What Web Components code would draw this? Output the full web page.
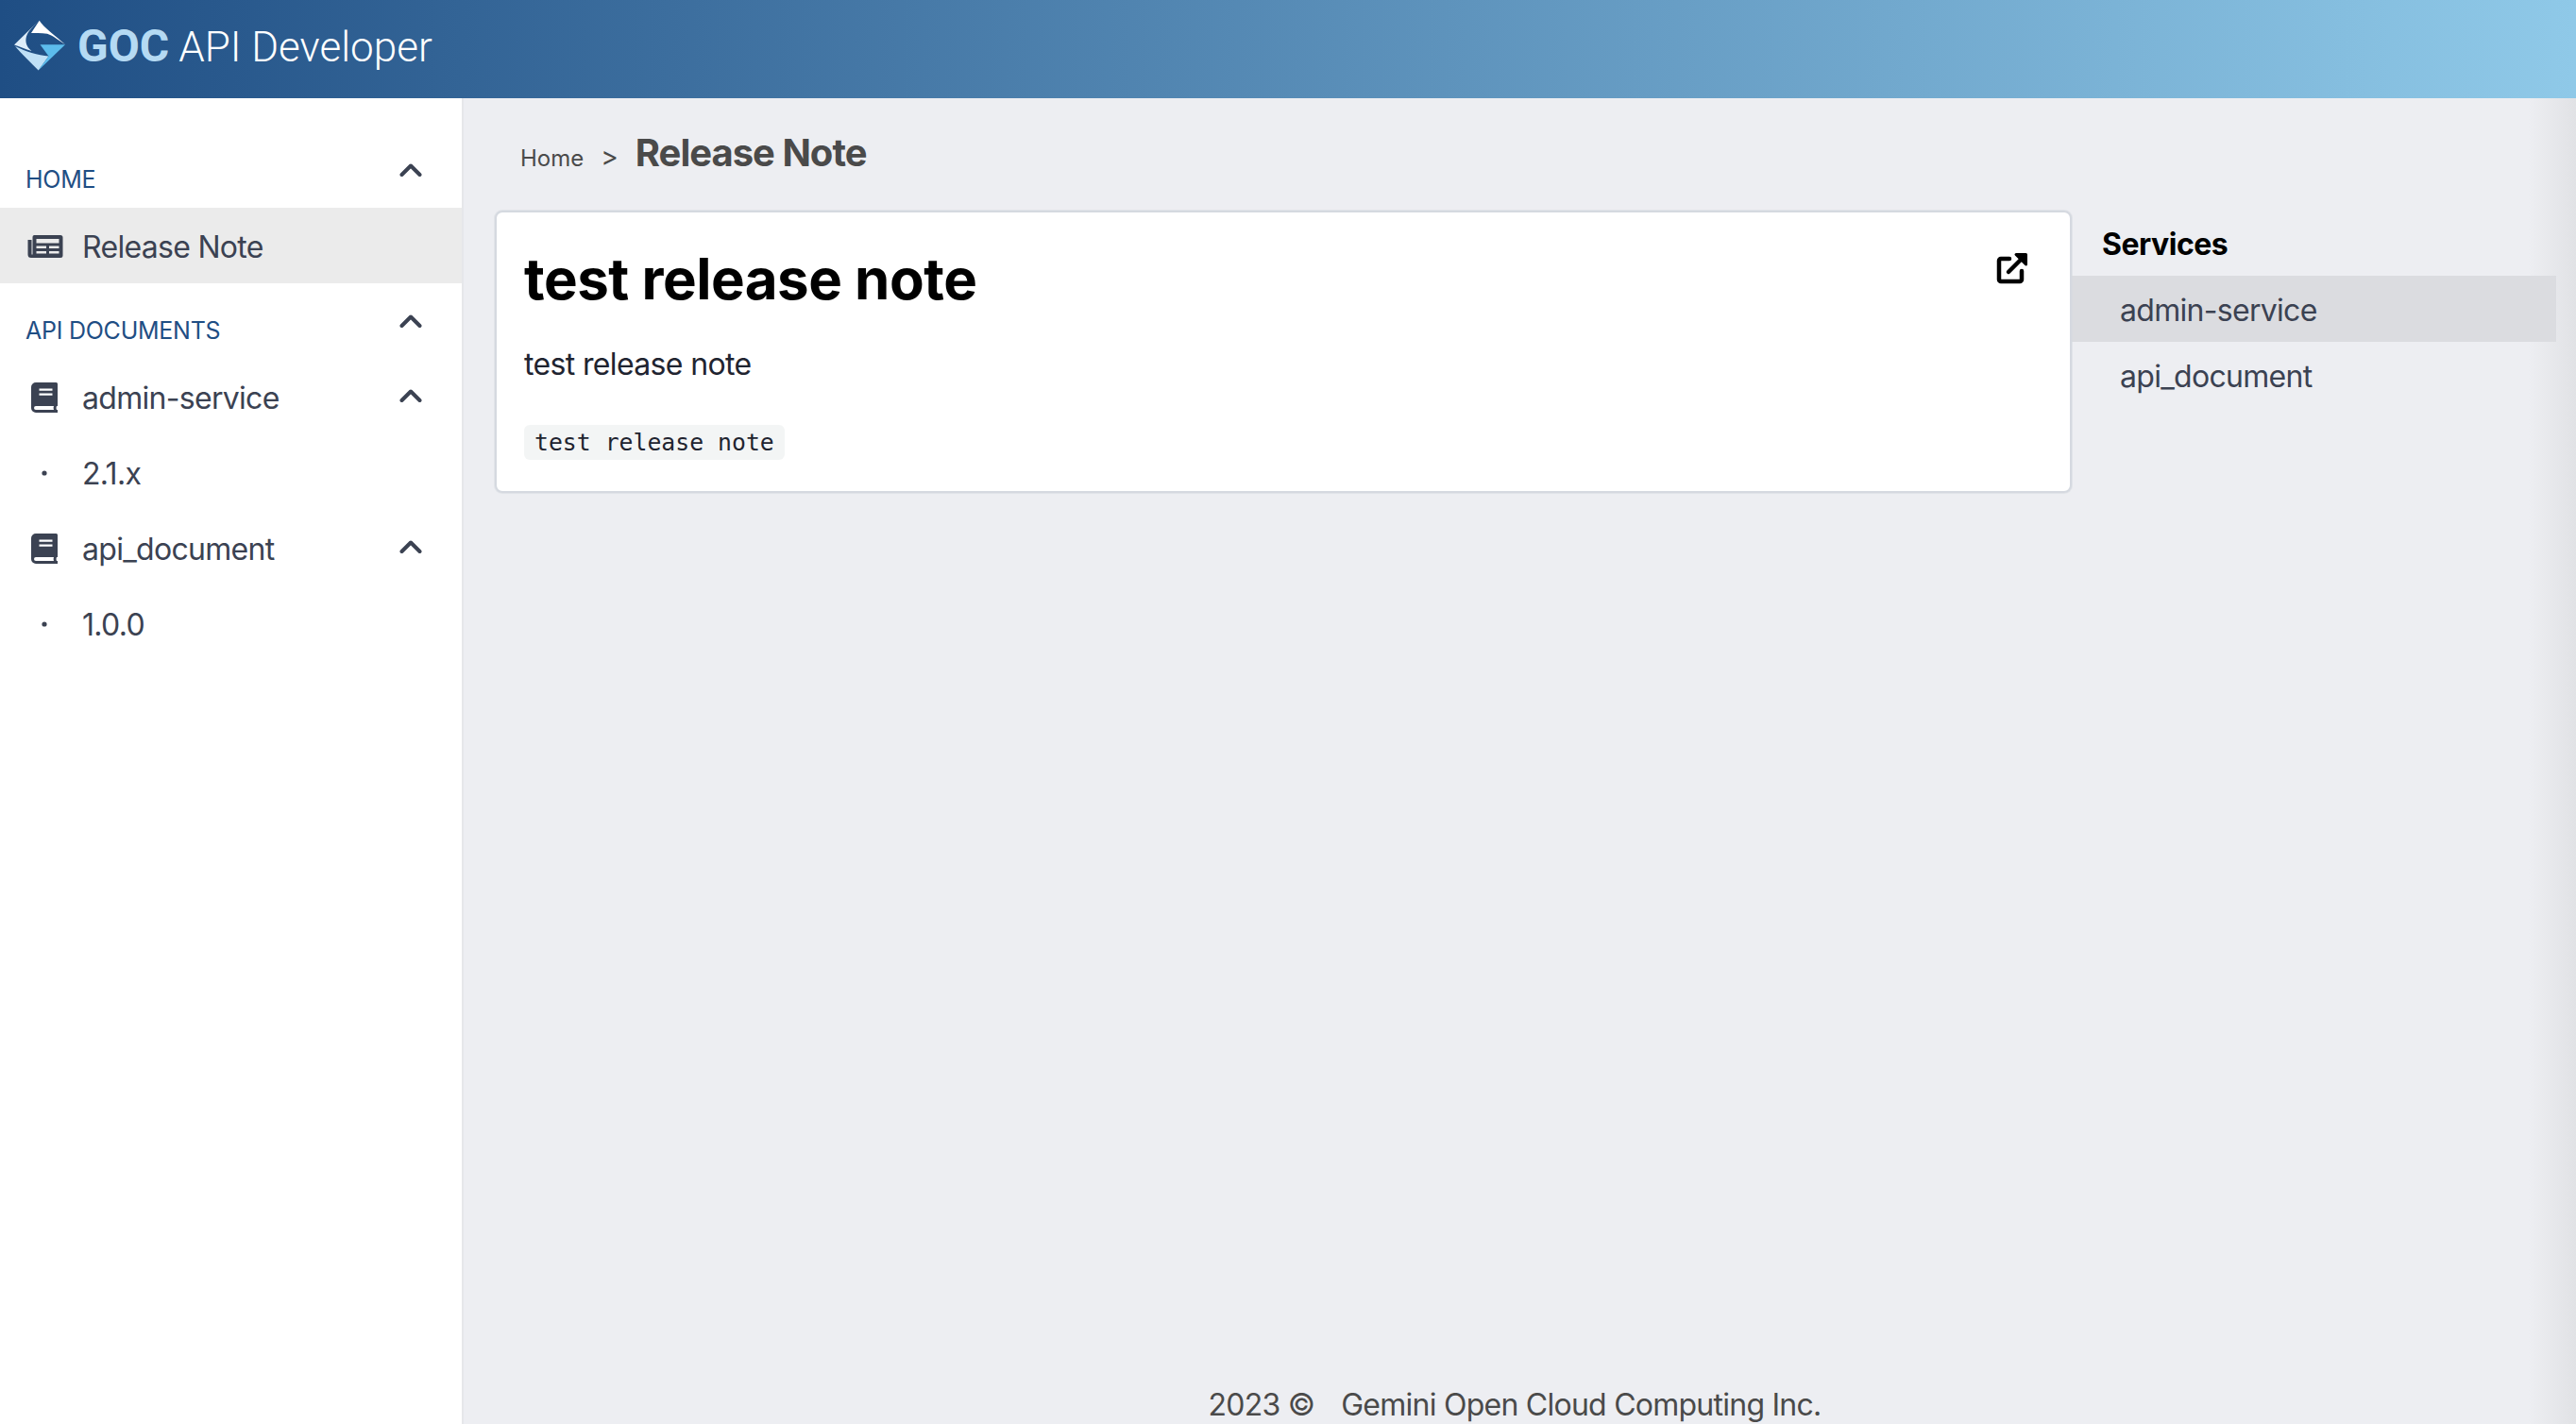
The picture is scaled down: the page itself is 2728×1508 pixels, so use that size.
<!doctype html>
<html lang="en">
<head>
<meta charset="utf-8">
<title>GOC API Developer</title>
<style>
  html, body { margin: 0; height: 100%; }
  body { overflow: hidden; font-family: Inter, "Liberation Sans", sans-serif; background: #edeef2; color: #3b4252; }
</style>
</head>
<body>
<api-shell>
  <app-header slot="header"></app-header>
  <side-nav slot="nav">
    <nav-label>HOME</nav-label>
    <nav-item icon="news" active>Release Note</nav-item>
    <nav-label>API DOCUMENTS</nav-label>
    <nav-item icon="book" chevron>admin-service</nav-item>
    <nav-item icon="dot">2.1.x</nav-item>
    <nav-item icon="book" chevron>api_document</nav-item>
    <nav-item icon="dot">1.0.0</nav-item>
  </side-nav>
  <bread-crumb slot="crumb" parent="Home">Release Note</bread-crumb>
  <note-card slot="card" title="test release note" body="test release note" code="test release note"></note-card>
  <service-list slot="services">
    <service-item active>admin-service</service-item>
    <service-item>api_document</service-item>
  </service-list>
  <page-footer slot="footer"></page-footer>
</api-shell>

<script>
const chevron = `<svg width="24" height="16" viewBox="0 0 24 16" fill="none" stroke="currentColor" stroke-width="4" stroke-linecap="round" stroke-linejoin="round"><path d="M2.500 13 12 3.500 21.500 13"/></svg>`;

const icons = {
  news: `<svg width="38" height="26" viewBox="0 0 38 26"><path fill="currentColor" fill-rule="evenodd" d="M7 1h28a2.500 2.500 0 0 1 2.500 2.500v19A2.500 2.500 0 0 1 35 25H4a3.500 3.500 0 0 1-3.500-3.500V6h4v15.500h1V3A2 2 0 0 1 7 1Zm2.500 4v4.500h24V5Zm0 7.500V15h10.500v-2.500Zm13.500 0V15h10.500v-2.500ZM9.500 18v2.500H20V18Zm13.500 0v2.500h10.500V18Z"/></svg>`,
  book: `<svg width="28" height="32" viewBox="0 0 28 32"><path fill="currentColor" fill-rule="evenodd" d="M5 0h21.500a1.500 1.500 0 0 1 1.500 1.500V25h-1c-.600 1.500-.600 2.500 0 4h1v3H5a5 5 0 0 1-5-5V5a5 5 0 0 1 5-5Zm3.500 6.500v2.300h14V6.500Zm0 5v2.300h14v-2.300ZM5 25a2 2 0 0 0 0 4h19c-.500-1.500-.500-2.500 0-4Z"/></svg>`,
  dot: `<svg width="6" height="6" viewBox="0 0 6 6"><circle cx="3" cy="3" r="2.600" fill="currentColor"/></svg>`
};

class ApiShell extends HTMLElement {
  constructor() {
    super();
    this.attachShadow({ mode: "open" }).innerHTML = `
      <style>
        :host { display: flex; flex-direction: column; height: 100vh; }
        .body { flex: 1; display: flex; min-height: 0; }
        .main { flex: 1; display: flex; flex-direction: column; min-width: 0; padding-left: 33px; position: relative; }
        .row { flex: 1; display: flex; align-items: flex-start; padding-right: 21px; position: relative; z-index: 1; }
        .edge { position: absolute; top: 0; right: 0; bottom: 0; width: 50px; background: linear-gradient(90deg, #edeef2, #e1e2e5); }
        ::slotted([slot="footer"]), ::slotted([slot="crumb"]) { position: relative; z-index: 1; }
      </style>
      <slot name="header"></slot>
      <div class="body">
        <slot name="nav"></slot>
        <div class="main">
          <div class="edge"></div>
          <slot name="crumb"></slot>
          <div class="row"><slot name="card"></slot><slot name="services"></slot></div>
          <slot name="footer"></slot>
        </div>
      </div>`;
  }
}

class AppHeader extends HTMLElement {
  constructor() {
    super();
    this.attachShadow({ mode: "open" }).innerHTML = `
      <style>
        :host { display: flex; align-items: center; box-sizing: border-box; height: 104px; flex: none; padding: 0 0 8px 15px; gap: 13px; background: linear-gradient(90deg, #1f4e84, #8fc9e8); font-family: Roboto, "Liberation Sans", sans-serif; font-size: 44px; font-weight: 300; color: #fff; }
        b { font-size: 48px; font-weight: 700; color: #b5daf3; margin-right: 10px; }
        svg { flex: none; }
      </style>
      <svg width="54" height="54" viewBox="0 0 54 54">
        <path fill="#fff" d="M26.700 .7C31 8 44 17 54 26 46 21 42 17 35 14.700 29 13.500 23 14 18 14Z"/>
        <path fill="#deedf9" d="M25.500 1.500 0 26.500C6 28.500 12 31 18.500 33 12 28 11 21 14 15 16 11 21 6 25.500 1.500Z"/>
        <path fill="#bfe0f6" d="M1 28C8 36 17 45 25.700 53.500L36.500 38.500C26 38 11 33 1 28Z"/>
        <path fill="#5cbcec" d="M27.500 26.300H54L25.700 53.500 36.500 38.500Z"/>
      </svg>
      <span><b>GOC</b>API Developer</span>`;
  }
}

class SideNav extends HTMLElement {
  constructor() {
    super();
    this.attachShadow({ mode: "open" }).innerHTML = `
      <style>
        :host { display: block; flex: none; box-sizing: border-box; width: 491px; padding-top: 36px; background: #fff; border-right: 2px solid #e6e7ea; }
      </style>
      <slot></slot>`;
  }
}

class NavLabel extends HTMLElement {
  constructor() {
    super();
    this.attachShadow({ mode: "open" }).innerHTML = `
      <style>
        :host { display: flex; justify-content: space-between; box-sizing: border-box; height: 80px; padding: 33px 42px 0 27px; font-size: 25px; line-height: 34px; letter-spacing: -.25px; color: #1f4e84; }
        span { color: #3b4252; position: relative; top: -1px; display: block; height: 16px; line-height: 0; }
      </style>
      <slot></slot><span>${chevron}</span>`;
  }
}

class NavItem extends HTMLElement {
  constructor() {
    super();
    const icon = icons[this.getAttribute("icon")] || "";
    const more = this.hasAttribute("chevron") ? `<span class="more">${chevron}</span>` : "";
    this.attachShadow({ mode: "open" }).innerHTML = `
      <style>
        :host { display: flex; align-items: center; box-sizing: border-box; height: 80px; padding: 2px 42px 0 0; font-size: 32px; letter-spacing: -.7px; color: #3b4252; }
        :host([active]) { background: #ebebeb; }
        .icon { flex: none; width: 87px; padding-left: 29px; box-sizing: border-box; display: flex; line-height: 0; }
        :host([icon="book"]) .icon { padding-left: 33px; }
        :host([icon="dot"]) .icon { padding-left: 44px; }
        .text { flex: 1; }
        .more { line-height: 0; display: block; position: relative; top: -2px; }
      </style>
      <span class="icon">${icon}</span><span class="text"><slot></slot></span>${more}`;
  }
}

class BreadCrumb extends HTMLElement {
  constructor() {
    super();
    this.attachShadow({ mode: "open" }).innerHTML = `
      <style>
        :host { display: flex; align-items: baseline; flex: none; box-sizing: border-box; height: 119px; padding: 33px 0 0 27px; color: #4a4a4a; }
        .parent { font-size: 24px; }
        .sep { font-size: 28px; margin: 0 18px; }
        .current { font-size: 40px; font-weight: 700; letter-spacing: -1px; }
      </style>
      <span class="parent">${this.getAttribute("parent")}</span><span class="sep">&gt;</span><span class="current"><slot></slot></span>`;
  }
}

class NoteCard extends HTMLElement {
  constructor() {
    super();
    this.attachShadow({ mode: "open" }).innerHTML = `
      <style>
        :host { display: block; box-sizing: border-box; flex: none; width: 1670px; height: 299px; position: relative; background: #fff; border: 2px solid #d5d9e0; border-radius: 8px; box-shadow: 0 0 0 1px rgba(213, 217, 224, .5); padding: 34px 29px 0; color: #1f2430; }
        h1 { margin: 0 0 31px; font-size: 60px; line-height: 72px; font-weight: 700; letter-spacing: -.5px; color: #000; }
        p { margin: 0 0 40px; font-size: 32px; line-height: 48px; letter-spacing: -.65px; }
        code { display: inline-block; height: 37px; line-height: 37px; padding: 0 11px; border-radius: 6px; background: #f3f5f5; font-family: "DejaVu Sans Mono", "Liberation Mono", monospace; font-size: 24.800px; color: #1f2430; }
        a { position: absolute; top: 42px; right: 44px; line-height: 0; color: #000; }
      </style>
      <h1>${this.getAttribute("title")}</h1>
      <p>${this.getAttribute("body")}</p>
      <code>${this.getAttribute("code")}</code>
      <a><svg width="34" height="34" viewBox="0 0 34 34" fill="none" stroke="currentColor" stroke-width="4.500" stroke-linecap="round" stroke-linejoin="round"><path d="M14 7H5a2 2 0 0 0-2 2v20a2 2 0 0 0 2 2h20a2 2 0 0 0 2-2V20"/><path d="M13 21 29 5"/><path fill="currentColor" stroke-width="3" d="M21 2.500H31.500V13Z"/></svg></a>`;
  }
}

class ServiceList extends HTMLElement {
  constructor() {
    super();
    this.attachShadow({ mode: "open" }).innerHTML = `
      <style>
        :host { display: block; flex: 1; min-width: 0; }
        h2 { margin: 0; height: 69px; box-sizing: border-box; padding: 16px 0 0 32px; font-size: 32px; line-height: 40px; font-weight: 700; letter-spacing: -.5px; color: #000; }
      </style>
      <h2>Services</h2>
      <slot></slot>`;
  }
}

class ServiceItem extends HTMLElement {
  constructor() {
    super();
    this.attachShadow({ mode: "open" }).innerHTML = `
      <style>
        :host { display: flex; align-items: center; box-sizing: border-box; height: 70px; padding: 2px 0 0 51px; font-size: 32px; letter-spacing: -.7px; color: #3b4252; }
        :host([active]) { background: #dbdce0; }
      </style>
      <slot></slot>`;
  }
}

class PageFooter extends HTMLElement {
  constructor() {
    super();
    this.attachShadow({ mode: "open" }).innerHTML = `
      <style>
        :host { display: flex; justify-content: center; flex: none; height: 40px; padding-right: 44px; font-size: 32px; line-height: 40px; letter-spacing: -.75px; color: #4a4a4a; }
        span + span { margin-left: 28px; }
      </style>
      <span>2023 ©</span><span>Gemini Open Cloud Computing Inc.</span>`;
  }
}

customElements.define("api-shell", ApiShell);
customElements.define("app-header", AppHeader);
customElements.define("side-nav", SideNav);
customElements.define("nav-label", NavLabel);
customElements.define("nav-item", NavItem);
customElements.define("bread-crumb", BreadCrumb);
customElements.define("note-card", NoteCard);
customElements.define("service-list", ServiceList);
customElements.define("service-item", ServiceItem);
customElements.define("page-footer", PageFooter);
</script>
</body>
</html>
